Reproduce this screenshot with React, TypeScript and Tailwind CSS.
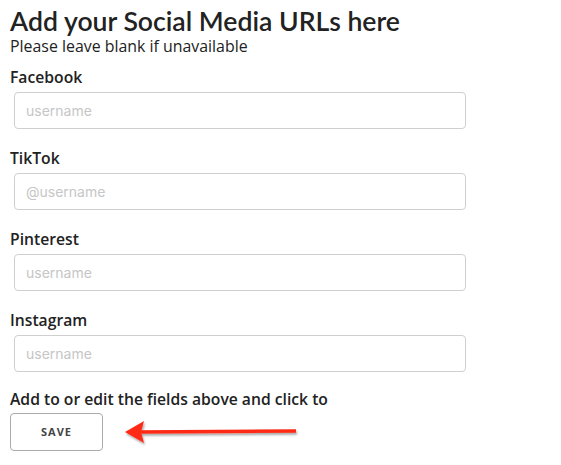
import React from "react";

const fields = [
  { label: "Facebook", ph: "username" },
  { label: "TikTok", ph: "@username" },
  { label: "Pinterest", ph: "username" },
  { label: "Instagram", ph: "username" },
];

function Arrow() {
  return (
    <svg width="180" height="30" viewBox="0 0 180 30" className="ml-[20px]">
      <defs>
        <filter id="sh" x="-10%" y="-50%" width="120%" height="200%">
          <feDropShadow dx="1" dy="2" stdDeviation="1.2" floodColor="#000" floodOpacity="0.35" />
        </filter>
      </defs>
      <g filter="url(#sh)">
        <path d="M14 13.2 L173 12.2 L173 15.8 L14 16.8 Z" fill="#ff2a14" />
        <path d="M2 15 L21 4 L18 15 L21 26 Z" fill="#ff2a14" />
      </g>
    </svg>
  );
}

export default function App() {
  return (
    <div className="bg-white w-[561px] h-[465px] pl-[10px] pt-[5px] text-[#222] font-['Open_Sans',sans-serif]">
      <h1 className="text-[26.6px] leading-[32px] font-semibold text-[#222] font-['Lato',sans-serif]">
        Add your Social Media URLs here
      </h1>
      <p className="text-[15.9px] leading-[18px] text-[#222]">Please leave blank if unavailable</p>
      {fields.map((f, i) => (
        <div key={f.label} className={i === 0 ? "mt-[12px]" : "mt-[19px]"}>
          <div className="text-[15.7px] leading-[20px] font-semibold text-[#222]">{f.label}</div>
          <input
            placeholder={f.ph}
            className="mt-[5px] ml-[4px] block w-[452px] h-[37px] border border-[#cfcfcf] rounded-[4px] px-[11px] text-[14px] text-[#333] placeholder:text-[#c6c6c6] outline-none font-['Inter',sans-serif]"
          />
        </div>
      ))}
      <div className="mt-[17px] text-[15.7px] leading-[20px] font-semibold text-[#222]">
        Add to or edit the fields above and click to
      </div>
      <div className="mt-[4px] flex items-center">
        <button className="w-[93px] h-[38px] border border-[#aaa] rounded-[4px] text-[11px] font-bold tracking-[1px] text-[#444] bg-white">
          SAVE
        </button>
        <Arrow />
      </div>
    </div>
  );
}
